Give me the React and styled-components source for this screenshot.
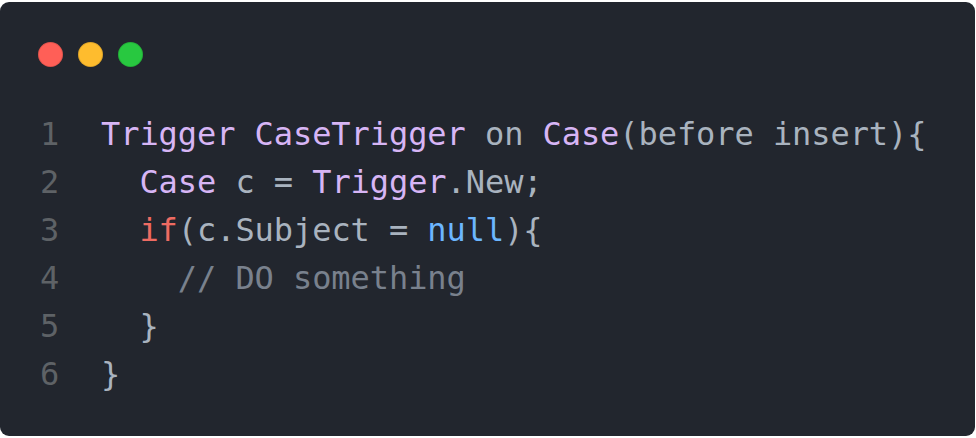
import React from "react";
import styled, { createGlobalStyle } from "styled-components";

const GlobalStyle = createGlobalStyle`
  html, body {
    margin: 0;
    padding: 0;
    background: #ffffff;
  }
`;

const Page = styled.div`
  padding: 2px 1px 2px 0;
`;

const Window = styled.div`
  height: 434px;
  box-sizing: border-box;
  background-color: #22262e;
  border-radius: 9px;
  padding: 40px 0 0 0;
  display: flex;
  flex-direction: column;
  gap: 43px;
`;

const Dots = styled.div`
  display: flex;
  gap: 15px;
  padding-left: 38px;
`;

const Dot = styled.span`
  width: 25px;
  height: 25px;
  border-radius: 50%;
  background-color: ${(p) => p.color};
  box-shadow: inset 0 0 0 1px rgba(0, 0, 0, 0.12);
`;

const Code = styled.div`
  display: grid;
  grid-template-columns: 61px 1fr;
  padding-left: 40px;
  font-family: "DejaVu Sans Mono", "Liberation Mono", monospace;
  font-size: 32px;
  letter-spacing: -0.07px;
  line-height: 48px;
  color: #a9b3bf;
  white-space: pre;
`;

const LineNo = styled.span`
  color: #5e6266;
`;

const Line = styled.span``;

const Tok = styled.span`
  color: ${(p) =>
    ({
      kw: "#d7b5f5",
      red: "#ee6b62",
      blue: "#6cb6ff",
      comment: "#79818d",
    }[p.kind] || "#a9b3bf")};
`;

const lines = [
  [
    ["kw", "Trigger"],
    [null, " "],
    ["kw", "CaseTrigger"],
    [null, " on "],
    ["kw", "Case"],
    [null, "(before insert){"],
  ],
  [
    [null, "  "],
    ["kw", "Case"],
    [null, " c = "],
    ["kw", "Trigger"],
    [null, ".New;"],
  ],
  [
    [null, "  "],
    ["red", "if"],
    [null, "(c.Subject = "],
    ["blue", "null"],
    [null, "){"],
  ],
  [
    [null, "    "],
    ["comment", "// DO something"],
  ],
  [[null, "  }"]],
  [[null, "}"]],
];

const App = () => {
  return (
    <Page>
      <GlobalStyle />
      <Window>
        <Dots>
          <Dot color="#ff5f57" />
          <Dot color="#febc2e" />
          <Dot color="#28c840" />
        </Dots>
        <Code>
          {lines.map((toks, i) => (
            <React.Fragment key={i}>
              <LineNo>{i + 1}</LineNo>
              <Line>
                {toks.map(([kind, text], j) => (
                  <Tok key={j} kind={kind}>
                    {text}
                  </Tok>
                ))}
              </Line>
            </React.Fragment>
          ))}
        </Code>
      </Window>
    </Page>
  );
};

export default App;
